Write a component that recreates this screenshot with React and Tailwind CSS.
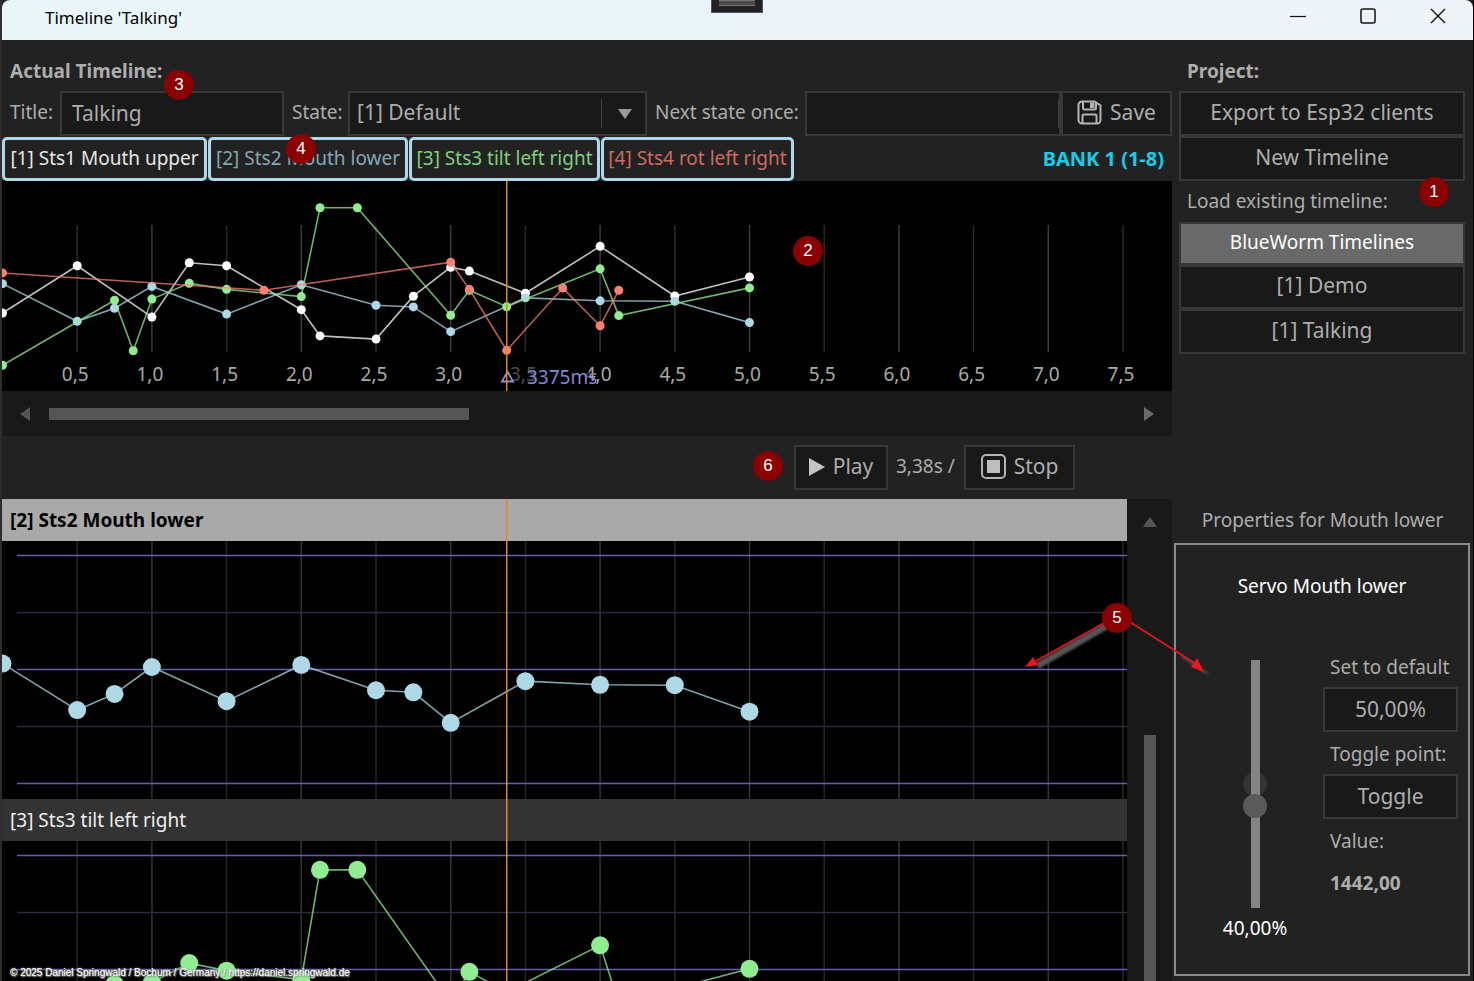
import React from "react";
import clsx from "clsx";

const PX_PER_SECOND = 149.4;
const CURSOR = 3.375;

// [seconds, percent]
const servos = [
  {
    id: 1,
    name: "Sts1 Mouth upper",
    color: "#ffffff",
    tab: "w-[205px] text-[#e6e6e6]",
    points: [
      [0, 36.7], [0.5, 62.3], [1, 34.5], [1.25, 63.9], [1.5, 62.3], [2, 38.5], [2.125, 24.3], [2.5, 22.6],
      [2.75, 45.8], [3, 61.5], [3.125, 59.4], [3.5, 47.4], [4, 72.8], [4.5, 45.9], [5, 56.2],
    ],
  },
  {
    id: 2,
    name: "Sts2 Mouth lower",
    color: "#add8e6",
    tab: "w-[200px] text-[#85a7b4]",
    points: [
      [0, 52.6], [0.5, 32.2], [0.75, 39.3], [1, 51.1], [1.5, 36.1], [2, 52], [2.5, 40.9], [2.75, 40],
      [3, 26.6], [3.5, 44.9], [4, 43.3], [4.5, 43.1], [5, 31.5],
    ],
  },
  {
    id: 3,
    name: "Sts3 tilt left right",
    color: "#90ee90",
    tab: "w-[191px] text-[#7fd07f]",
    points: [
      [0, 8.4], [0.75, 43.6], [0.875, 16.3], [1, 44.3], [1.25, 52.8], [1.5, 49.5], [2, 45.6], [2.125, 93.7],
      [2.375, 93.7], [3, 35.5], [3.125, 49], [3.375, 40.1], [4, 60.6], [4.125, 35.3], [5, 50.3],
    ],
  },
  {
    id: 4,
    name: "Sts4 rot left right",
    color: "#fa8072",
    tab: "w-[193px] text-[#cf6a61]",
    points: [
      [0, 58.4], [1.75, 49], [3, 64.2], [3.125, 49.5], [3.375, 16.5], [3.75, 50.2], [4, 29.8], [4.125, 49],
    ],
  },
];

const ticks = Array.from({ length: 15 }, (_, i) => (i + 1) / 2);

const timeToX = (t) => t * PX_PER_SECOND + 0.5;

const formatTick = (t) => t.toFixed(1).replace(".", ",");

function Curve({ points, color, toY, radius }) {
  return (
    <g>
      <polyline
        points={points.map(([t, v]) => `${timeToX(t)},${toY(v)}`).join(" ")}
        fill="none"
        stroke={color}
        strokeOpacity="0.75"
        strokeWidth="1.6"
      />
      {points.map(([t, v]) => (
        <circle key={t} cx={timeToX(t)} cy={toY(v)} r={radius} fill={color} />
      ))}
    </g>
  );
}

function Cursor() {
  return <line x1={timeToX(CURSOR)} x2={timeToX(CURSOR)} y1="0" y2="100%" stroke="#e08a1a" strokeWidth="1.5" />;
}

function Overview() {
  const toY = (v) => 199.8 - v * 1.847;
  return (
    <svg className="block w-full h-[210px] bg-black" role="img" aria-label="Timeline overview">
      {ticks.map((t) => (
        <line key={t} x1={timeToX(t)} x2={timeToX(t)} y1="44" y2="171" stroke={t % 1 ? "#2a2a2a" : "#3d3d3d"} strokeWidth="1.5" />
      ))}
      {ticks.map((t) => (
        <text key={t} x={timeToX(t) - 2} y="200" textAnchor="middle" fontSize="19" fill="#a9a9a9">
          {formatTick(t)}
        </text>
      ))}
      <rect x="507" y="181" width="80" height="26" fill="#000" fillOpacity="0.55" />
      {servos.map((s) => (
        <Curve key={s.id} points={s.points} color={s.color} toY={toY} radius="4.5" />
      ))}
      <path d="M500 200.500 L505.500 190.500 L511 200.500 Z" fill="none" stroke="#8f8fdc" strokeWidth="1.8" />
      <text x="525" y="203" fontSize="19" fill="#8585d6">
        3375ms
      </text>
      <Cursor />
    </svg>
  );
}

function Track({ servo, selected }) {
  const toY = (v) => 242.5 - v * 2.28;
  return (
    <section>
      <h2
        className={clsx(
          "h-[42px] px-2 flex items-center text-[19px]",
          selected ? "bg-[#a9a9a9] text-black font-bold" : "bg-[#333333] text-[#eeeeee]"
        )}
      >
        [{servo.id}] {servo.name}
      </h2>
      <svg className="block w-full h-[258px] bg-black" role="img" aria-label={servo.name}>
        {ticks.map((t) => (
          <line key={t} x1={timeToX(t)} x2={timeToX(t)} y1="0" y2="258" stroke={t % 1 ? "#262626" : "#363636"} strokeWidth="1.5" />
        ))}
        {[0, 25, 50, 75, 100].map((v) => (
          <line key={v} x1="15" x2="100%" y1={toY(v)} y2={toY(v)} stroke={v % 50 ? "#2d2b3e" : "#6460b0"} strokeWidth="1.6" />
        ))}
        <Curve points={servo.points} color={servo.color} toY={toY} radius="9" />
      </svg>
    </section>
  );
}

function Button({ className, children }) {
  return (
    <button
      type="button"
      className={clsx(
        "flex items-center justify-center border-2 border-[#383838] pb-0.5 text-[21px] whitespace-nowrap",
        className
      )}
    >
      {children}
    </button>
  );
}

function Dropdown({ id, options, className, arrow }) {
  return (
    <div className={clsx("relative h-[45px]", className)}>
      <select id={id} className="appearance-none size-full bg-[#191919] border-2 border-[#383838] pl-[7px] pb-0.5 text-[21px]">
        {options.map((o) => (
          <option key={o}>{o}</option>
        ))}
      </select>
      {arrow ? (
        <span className="pointer-events-none absolute right-0 inset-y-2 w-[46px] border-l border-[#404040] flex items-center justify-center">
          <svg width="14" height="10" fill="#999999">
            <path d="M0 0h14L7 10z" />
          </svg>
        </span>
      ) : (
        <span className="pointer-events-none absolute right-[2px] inset-y-2 border-l border-[#404040]" />
      )}
    </div>
  );
}

function SaveIcon() {
  return (
    <svg width="25" height="25" viewBox="0 0 25 25" fill="none" stroke="#b4b4b4" strokeWidth="2">
      <path d="M5 1.500h12.500L23.500 5.500V20a3.500 3.500 0 0 1-3.500 3.500H5A3.500 3.500 0 0 1 1.500 20V5A3.500 3.500 0 0 1 5 1.500z" />
      <path d="M6 2v6a1.500 1.500 0 0 0 1.500 1.500h10A1.500 1.500 0 0 0 19 8V2.500" />
      <path d="M5.500 23v-7A1.500 1.500 0 0 1 7 14.500h11a1.500 1.500 0 0 1 1.500 1.500v7" />
      <path d="M13 2.500h4.500v5.500H13z" fill="#b4b4b4" stroke="none" />
    </svg>
  );
}

function StopIcon() {
  return (
    <svg width="25" height="25" viewBox="0 0 25 25">
      <rect x="1" y="1" width="23" height="23" rx="4" fill="none" stroke="#b4b4b4" strokeWidth="2" />
      <rect x="6" y="6" width="13" height="13" fill="#bdbdbd" />
    </svg>
  );
}

function TitleBar() {
  return (
    <header className="relative h-10 shrink-0 flex items-center pl-[43px] rounded-t-lg bg-gradient-to-r from-[#e9f6f8] via-[#ebf4fa] to-[#eff4f8] text-black">
      <h1 className="flex-1 text-[17px] pb-1">Timeline 'Talking'</h1>
      <div className="absolute top-0 left-[709px] w-[52px] h-[13px] bg-[#222226] border border-t-0 border-[#555555] flex justify-center">
        <span className="w-9 h-1.5 bg-[#4a4a4a] border-y border-[#777777]" />
      </div>
      <div className="flex self-stretch items-center pb-2 gap-[54px] pr-[27px]">
        <button type="button" aria-label="Minimize">
          <svg width="16" height="16" stroke="#111111" strokeWidth="1.200">
            <path d="M0 8.500h16" />
          </svg>
        </button>
        <button type="button" aria-label="Maximize">
          <svg width="16" height="16" fill="none" stroke="#111111" strokeWidth="1.500">
            <rect x="1" y="1" width="14" height="14" rx="2" />
          </svg>
        </button>
        <button type="button" aria-label="Close">
          <svg width="16" height="16" stroke="#111111" strokeWidth="1.400">
            <path d="M1 1l14 14M15 1L1 15" />
          </svg>
        </button>
      </div>
    </header>
  );
}

function Toolbar() {
  return (
    <div className="h-[45px] shrink-0 flex items-center text-[19px] whitespace-nowrap">
      <label htmlFor="title" className="w-[58px] pl-2 pb-0.5">
        Title:
      </label>
      <div className="flex-[224] h-[45px]">
        <input
          id="title"
          defaultValue="Talking"
          className="size-full bg-[#191919] border-2 border-[#383838] px-2.5 pb-0.5 text-[21px]"
        />
      </div>
      <label htmlFor="state" className="w-16 pl-2 pb-0.5">
        State:
      </label>
      <Dropdown id="state" options={["[1] Default"]} className="flex-[299]" arrow />
      <label htmlFor="next-state" className="w-[158px] pl-2 pb-0.5">
        Next state once:
      </label>
      <Dropdown id="next-state" options={[""]} className="flex-[256]" />
      <Button className="h-[45px] w-[111px] gap-2 bg-[#191919]">
        <SaveIcon />
        Save
      </Button>
    </div>
  );
}

function ServoPanel() {
  return (
    <div className="ml-[2px] mr-[3px] h-[433px] border-2 border-[#8a8a8a] text-[19px] flex flex-col">
      <h3 className="pt-[27px] text-center text-white leading-7">Servo Mouth lower</h3>
      <div className="flex justify-between pr-2.5">
        <div className="w-[146px] pl-3 pt-[60px] flex flex-col items-center">
          <div className="relative w-6 h-[248px]">
            <span className="absolute top-1/2 -mt-3 size-6 rounded-full bg-[#333333]" />
            <input
              type="range"
              aria-label="Servo Mouth lower"
              defaultValue="40"
              className="relative block w-6 h-full appearance-none bg-transparent [writing-mode:vertical-lr] [direction:rtl] [&::-webkit-slider-runnable-track]:w-[9px] [&::-webkit-slider-runnable-track]:h-full [&::-webkit-slider-runnable-track]:bg-[#848484] [&::-webkit-slider-thumb]:appearance-none [&::-webkit-slider-thumb]:size-6 [&::-webkit-slider-thumb]:rounded-full [&::-webkit-slider-thumb]:bg-[#5a5a5a] [&::-webkit-slider-thumb]:-ml-2"
            />
          </div>
          <output className="mt-1.5 leading-7 text-white">40,00%</output>
        </div>
        <div className="w-[135px] pt-[53px] flex flex-col whitespace-nowrap leading-7">
          <p className="pl-[7px]">Set to default</p>
          <Button className="h-[45px] mt-1.5 bg-[#191919]">50,00%</Button>
          <p className="pl-[7px] mt-2">Toggle point:</p>
          <Button className="h-[45px] mt-1.5 bg-[#191919]">Toggle</Button>
          <p className="pl-[7px] mt-2">Value:</p>
          <p className="pl-[7px] mt-3.5 font-bold">1442,00</p>
        </div>
      </div>
    </div>
  );
}

function ProjectColumn() {
  return (
    <aside className="w-[301px] shrink-0 pt-3 flex flex-col text-[19px]">
      <h2 className="h-[39px] pl-[15px] pt-1 font-bold leading-[30px]">Project:</h2>
      <nav className="flex flex-col pl-[7px] pr-2">
        <Button className="h-[45px] bg-[#191919]">Export to Esp32 clients</Button>
        <Button className="h-[45px] bg-[#191919]">New Timeline</Button>
        <p className="h-[41px] pl-2 flex items-center">Load existing timeline:</p>
        <Button className="h-[43px] bg-[#696969] text-white">
          <span className="text-[19px]">BlueWorm Timelines</span>
        </Button>
        <Button className="h-11 bg-[#191919]">[1] Demo</Button>
        <Button className="h-[45px] bg-[#191919]">[1] Talking</Button>
      </nav>
      <h2 className="mt-[147px] h-[42px] pb-1 flex items-center justify-center">Properties for Mouth lower</h2>
      <ServoPanel />
    </aside>
  );
}

const notes = [
  { n: 1, pos: "left-[1417px] top-[177px]" },
  { n: 2, pos: "left-[791px] top-[236px]" },
  { n: 3, pos: "left-[162px] top-[70px]" },
  { n: 4, pos: "left-[284px] top-[134px]" },
  { n: 5, pos: "left-[1100px] top-[603px]" },
  { n: 6, pos: "left-[751px] top-[451px]" },
];

// Numbered notes and arrows on top of the window
function Notes() {
  return (
    <div className="pointer-events-none absolute inset-0 font-['Liberation_Sans',sans-serif]">
      <svg className="absolute left-[1018px] top-[610px]" width="192" height="70">
        <defs>
          <filter id="soft">
            <feGaussianBlur stdDeviation="1.2" />
          </filter>
        </defs>
        <path d="M88 15L17 56" stroke="#555555" strokeWidth="7" filter="url(#soft)" />
        <path d="M162 47L188 64" stroke="#555555" strokeWidth="2" filter="url(#soft)" />
        <path d="M84 13L16 51M110 12L176 54" stroke="#e0141c" strokeWidth="2" />
        <path d="M5 57L13 47L18 55zM184 62L171 57L177 48z" fill="#f0141c" />
      </svg>
      {notes.map(({ n, pos }) => (
        <span
          key={n}
          className={clsx("absolute size-[30px] rounded-full bg-[#8b0000] text-white text-[17px] flex items-center justify-center", pos)}
        >
          {n}
        </span>
      ))}
      <p className="absolute left-2 bottom-0.5 text-[10px] leading-3 text-white whitespace-nowrap [text-shadow:0_0_2px_#999,0_0_1px_#999,1px_1px_1px_#888]">
        © 2025 Daniel Springwald / Bochum / Germany / https://daniel.springwald.de
      </p>
    </div>
  );
}

export default function App() {
  return (
    <div className="relative h-screen overflow-hidden flex flex-col bg-[#222222] border-l-2 border-l-[#2e2e2e] border-r border-r-black text-[#adadad] font-['Noto_Sans',sans-serif]">
      <TitleBar />
      <div className="flex-1 min-h-0 flex">
        <main className="flex-1 min-w-0 flex flex-col">
          <h2 className="h-[51px] shrink-0 pl-2 pt-4 text-[19px] leading-[30px] font-bold">Actual Timeline:</h2>
          <Toolbar />
          <div className="h-[45px] shrink-0 flex items-center gap-px text-[19px] whitespace-nowrap">
            {servos.map((s) => (
              <button
                type="button"
                key={s.id}
                className={clsx("h-11 border-3 border-[#add8e6] rounded-[5px]", s.tab)}
              >
                [{s.id}] {s.name}
              </button>
            ))}
            <strong className="ml-auto pr-2 text-[20px] text-[#14cde8]">BANK 1 (1-8)</strong>
          </div>
          <Overview />
          <div className="h-[45px] shrink-0 px-[18px] flex items-center bg-[#191919]">
            <svg width="10" height="14" fill="#555555">
              <path d="M10 0v14L0 7z" />
            </svg>
            <div className="flex-1 mx-[19px]">
              <div className="w-[39%] h-3 bg-[#555555]" />
            </div>
            <svg width="10" height="14" fill="#6a6a6a">
              <path d="M0 0v14l10-7z" />
            </svg>
          </div>
          <div className="h-[63px] shrink-0 flex items-center justify-end gap-2 pr-[97px] text-[19px]">
            <Button className="h-[45px] w-[94px] gap-2 bg-[#191919]">
              <svg width="16" height="18" fill="#c4c4c4">
                <path d="M0 0l16 9L0 18z" />
              </svg>
              Play
            </Button>
            <span className="w-[60px] pb-0.5 whitespace-nowrap">3,38s /</span>
            <Button className="h-[45px] w-[111px] gap-2 bg-[#191919]">
              <StopIcon />
              Stop
            </Button>
          </div>
          <div className="flex-1 min-h-0 flex overflow-hidden">
            <div className="relative flex-1 min-w-0">
              <Track servo={servos[1]} selected />
              <Track servo={servos[2]} />
              <svg className="pointer-events-none absolute inset-0 size-full">
                <Cursor />
              </svg>
            </div>
            <div className="w-[45px] pt-[18px] flex flex-col items-center bg-[#191919]">
              <svg width="14" height="10" className="shrink-0" fill="#555555">
                <path d="M0 10h14L7 0z" />
              </svg>
              <div className="mt-52 flex-1 w-3 bg-[#555555]" />
            </div>
          </div>
        </main>
        <ProjectColumn />
      </div>
      <Notes />
    </div>
  );
}
